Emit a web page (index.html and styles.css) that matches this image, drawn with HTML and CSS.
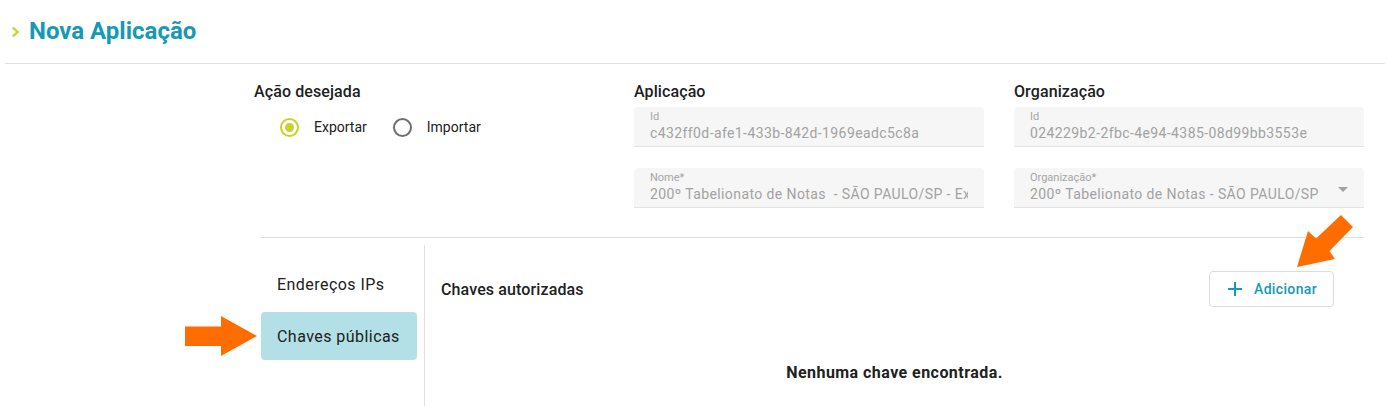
FILE: index.html
```html
<!DOCTYPE html>
<html lang="pt-BR">
<head>
<meta charset="utf-8">
<title>Nova Aplicação</title>
<link rel="stylesheet" href="styles.css">
</head>
<body>
<header class="page-header">
  <svg class="chevron" width="9" height="12" viewBox="0 0 9 12"><polyline points="1.8,1.5 6.6,6 1.8,10.5" fill="none" stroke="#c6d32c" stroke-width="2.3"/></svg>
  <h1 class="page-title">Nova Aplicação</h1>
</header>

<main class="content">
  <section class="top-grid">
    <div class="col">
      <h2 class="col-title">Ação desejada</h2>
      <div class="radio-group">
        <label class="radio"><span class="radio-circle checked"><span class="radio-dot"></span></span><span class="radio-label">Exportar</span></label>
        <label class="radio"><span class="radio-circle"></span><span class="radio-label">Importar</span></label>
      </div>
    </div>
    <div class="col">
      <h2 class="col-title">Aplicação</h2>
      <div class="field">
        <div class="field-label">Id</div>
        <div class="field-value">c432ff0d-afe1-433b-842d-1969eadc5c8a</div>
      </div>
      <div class="field">
        <div class="field-label">Nome*</div>
        <div class="field-value">200º Tabelionato de Notas  - SÃO PAULO/SP - Exportação</div>
      </div>
    </div>
    <div class="col">
      <h2 class="col-title">Organização</h2>
      <div class="field">
        <div class="field-label">Id</div>
        <div class="field-value">024229b2-2fbc-4e94-4385-08d99bb3553e</div>
      </div>
      <div class="field field-select">
        <div class="field-label">Organização*</div>
        <div class="field-value">200º Tabelionato de Notas - SÃO PAULO/SP</div>
        <span class="select-caret"></span>
      </div>
    </div>
  </section>

  <section class="lower">
    <nav class="side-nav">
      <div class="nav-item">Endereços IPs</div>
      <div class="nav-item active">Chaves públicas</div>
    </nav>
    <div class="panel">
      <div class="panel-head">
        <h3 class="panel-title">Chaves autorizadas</h3>
        <button class="btn-add" type="button">
          <svg class="plus" width="16" height="16" viewBox="0 0 16 16"><path d="M8 1v14M1 8h14" stroke="#1699b4" stroke-width="2" fill="none"/></svg>
          <span>Adicionar</span>
        </button>
      </div>
      <p class="empty">Nenhuma chave encontrada.</p>
    </div>
  </section>
</main>

<svg class="annotations" width="1387" height="406" viewBox="0 0 1387 406">
  <polygon points="185,326.5 221,326.5 221,316 257,336 221,356 221,346 185,346" fill="#ff6d00"/>
  <polygon points="1341,215 1353,227 1329.5,251 1335,259 1297,267 1308,231 1316,238.5" fill="#ff6d00"/>
</svg>
</body>
</html>
```

FILE: styles.css
```css
* { box-sizing: border-box; }

html, body {
  margin: 0;
  padding: 0;
  background: #ffffff;
  font-family: Roboto, "Noto Sans", "Liberation Sans", sans-serif;
  color: #212121;
}

body {
  position: relative;
  width: 1387px;
  height: 406px;
  overflow: hidden;
}

.page-header {
  display: flex;
  align-items: center;
  height: 64px;
  margin-left: 5px;
  margin-right: 2px;
  padding-left: 6px;
  border-bottom: 1px solid #e0e0e0;
}

.chevron {
  display: block;
  margin-right: 9px;
  margin-top: 1px;
}

.page-title {
  margin: 0;
  font-size: 24px;
  font-weight: 700;
  color: #1699b4;
  line-height: 28px;
  margin-top: -2px;
}

.content {
  margin-left: 254px;
  width: 1110px;
  padding-top: 18px;
}

.top-grid {
  display: grid;
  grid-template-columns: 350px 350px 350px;
  column-gap: 30px;
}

.col-title {
  margin: 0 0 5px 0;
  font-size: 16px;
  font-weight: 500;
  line-height: 20px;
  letter-spacing: 0.1px;
  color: #212121;
}

.radio-group {
  display: flex;
  align-items: center;
  margin-top: 15px;
  margin-left: 26px;
  gap: 26px;
}

.radio {
  display: flex;
  align-items: center;
  gap: 15px;
  height: 20px;
}

.radio-circle {
  width: 19px;
  height: 19px;
  border: 2px solid #6f6f6f;
  border-radius: 50%;
  display: flex;
  align-items: center;
  justify-content: center;
}

.radio-circle.checked {
  border-color: #c6d32c;
}

.radio-dot {
  width: 9px;
  height: 9px;
  border-radius: 50%;
  background: #c6d32c;
}

.radio-label {
  font-size: 14px;
  color: #212121;
}

.field {
  position: relative;
  height: 40px;
  margin-bottom: 21px;
  padding: 3px 16px 0 16px;
  background: #f6f6f6;
  border-bottom: 1px solid #e3e3e3;
  border-radius: 4px 4px 0 0;
  overflow: hidden;
}

.field-label {
  font-size: 11px;
  line-height: 14px;
  color: #a5a5a5;
}

.field-value {
  font-size: 14px;
  letter-spacing: 0.4px;
  line-height: 18px;
  color: #a2a2a2;
  white-space: pre;
  overflow: hidden;
  text-overflow: clip;
}

.field-select .field-value {
  margin-right: 24px;
}

.select-caret {
  position: absolute;
  right: 16px;
  top: 19px;
  width: 0;
  height: 0;
  border-left: 5px solid transparent;
  border-right: 5px solid transparent;
  border-top: 5px solid #a2a2a2;
}

.lower {
  display: flex;
  margin-left: 7px;
  margin-top: 8px;
  border-top: 1px solid #e0e0e0;
  padding-top: 7px;
  min-height: 170px;
}

.side-nav {
  width: 163px;
  flex: none;
  padding-top: 15px;
  display: flex;
  flex-direction: column;
  gap: 4px;
}

.nav-item {
  width: 156px;
  height: 48px;
  padding-left: 16px;
  display: flex;
  align-items: center;
  font-size: 16px;
  letter-spacing: 0.45px;
  color: #212121;
  border-radius: 4px;
}

.nav-item.active {
  background: #b3e0e6;
}

.panel {
  flex: 1;
  border-left: 1px solid #e0e0e0;
  padding: 26px 30px 0 16px;
}

.panel-head {
  display: flex;
  align-items: center;
  justify-content: space-between;
  height: 36px;
}

.panel-title {
  margin: 0;
  font-size: 16px;
  font-weight: 500;
  letter-spacing: 0.12px;
  color: #212121;
}

.btn-add {
  display: flex;
  align-items: center;
  gap: 11px;
  height: 36px;
  width: 125px;
  padding: 0 0 0 17px;
  background: #ffffff;
  border: 1px solid #dcdcdc;
  border-radius: 4px;
  font-family: inherit;
  font-size: 14px;
  font-weight: 500;
  letter-spacing: 0.35px;
  color: #1699b4;
}

.plus { display: block; }

.empty {
  margin: 56px 0 0 0;
  line-height: 20px;
  text-align: center;
  font-size: 16px;
  font-weight: 700;
  letter-spacing: 0.45px;
  color: #212121;
  padding-left: 14px;
}

.annotations {
  position: absolute;
  left: 0;
  top: 0;
  pointer-events: none;
}
```
